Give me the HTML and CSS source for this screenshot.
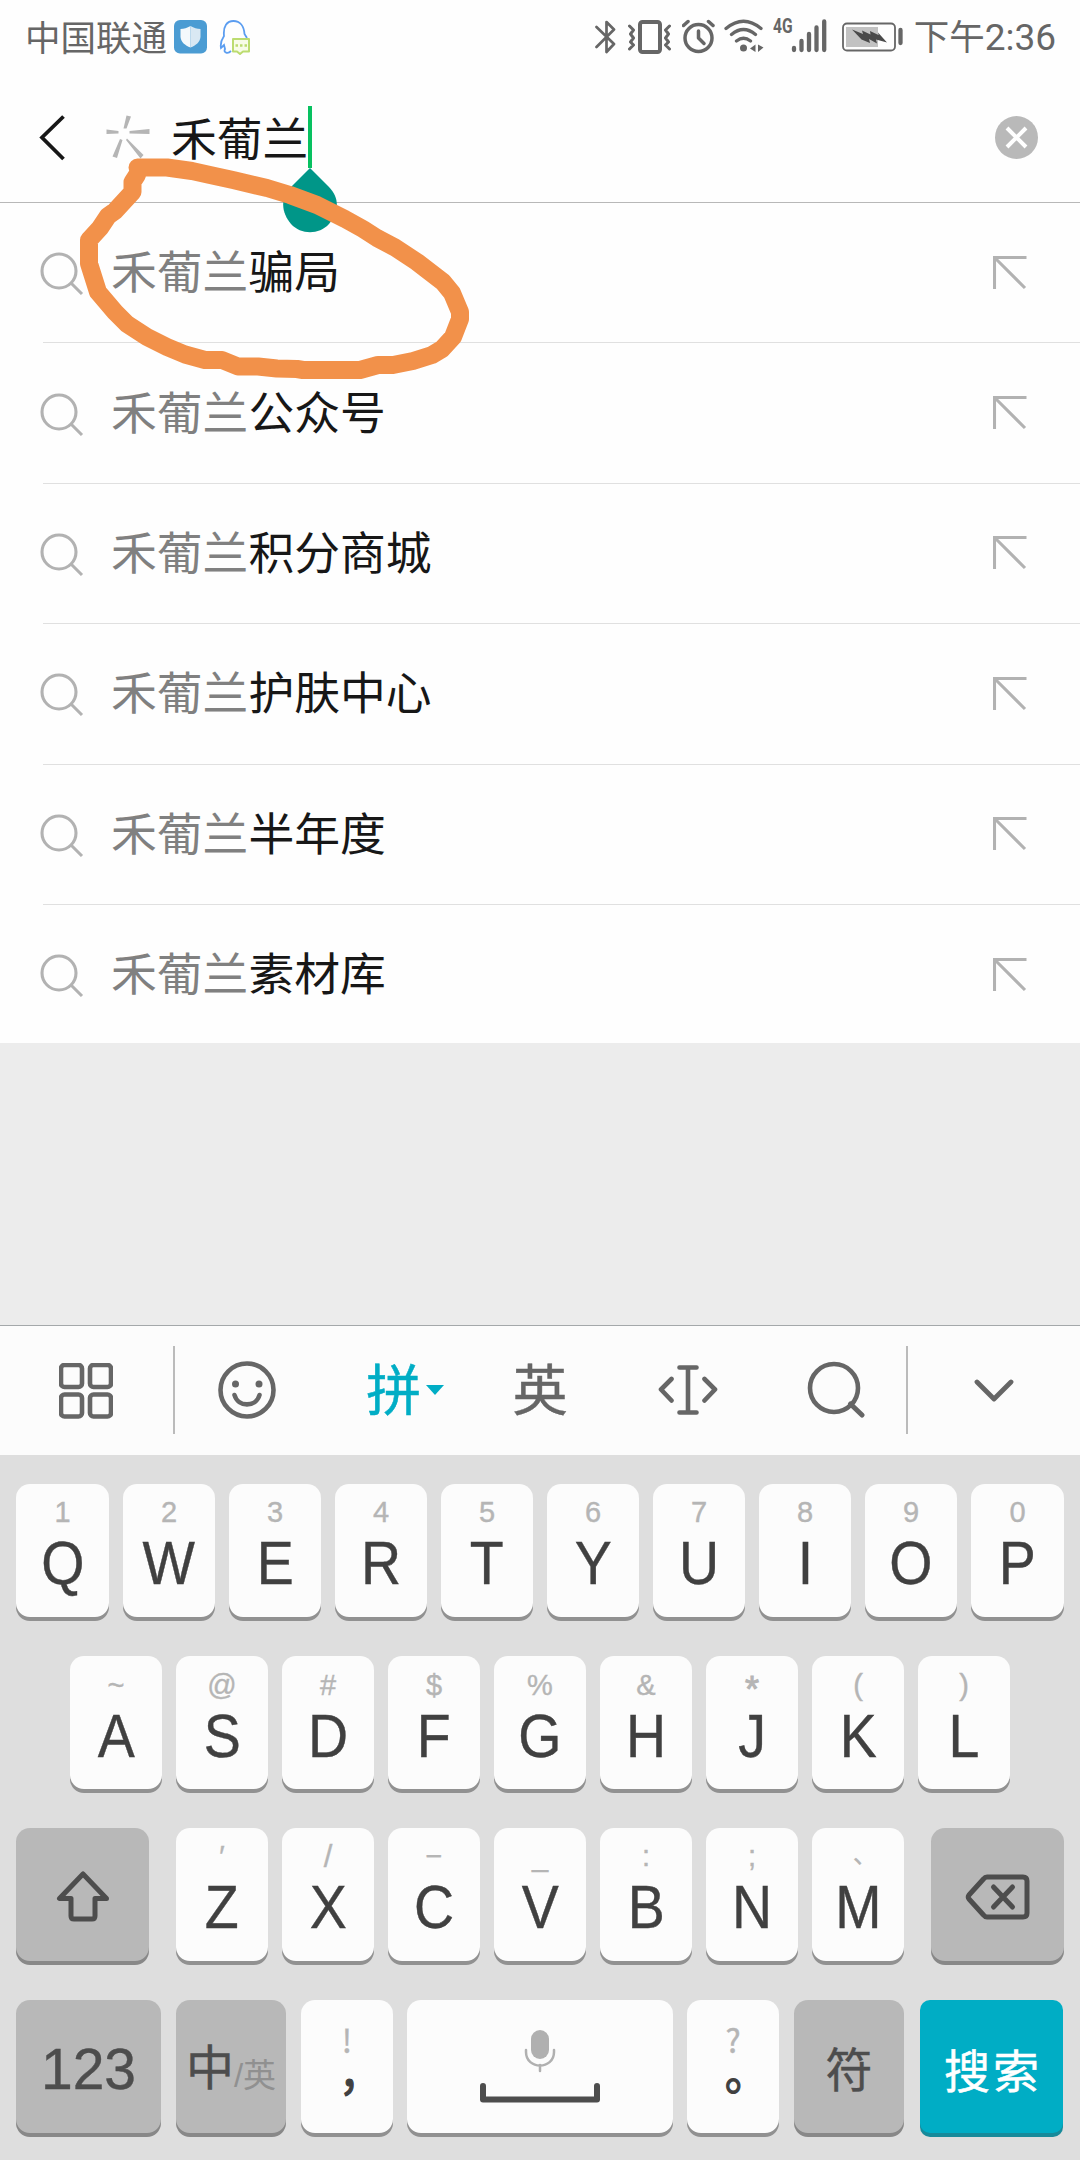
FILE: index.html
```
<!DOCTYPE html>
<html lang="zh-CN">
<head>
    <meta charset="UTF-8">
    <meta name="viewport" content="width=device-width, initial-scale=1.0">
    <title>搜索</title>
    <link rel="stylesheet" href="styles.css">
</head>
<body>

    <!-- 图标 -->
    <svg class="symbols">
        <symbol id="icon-search" viewBox="0 0 44 46">
            <circle cx="19" cy="19" r="17" />
            <path d="M31 31L42 42" />
        </symbol>
        <symbol id="icon-fill" viewBox="0 0 34 34">
            <path d="M1.500 33V1.500H33.500M2 2L32 32" />
        </symbol>
    </svg>

    <!-- 状态栏 -->
    <div class="status-bar">
        <span class="carrier">中国联通</span>
        <svg class="app-icon" width="33" height="34" viewBox="0 0 33 34">
            <rect width="33" height="33.500" rx="6" fill="#4b9cd3" />
            <path d="M16.500 6C13 8 10 9 6.500 9V17C7 22 11 25.500 16.500 27.500Z" fill="#f4f9fc" />
            <path d="M16.500 6C20 8 23 9 26.500 9V17C26 22 22 25.500 16.500 27.500Z" fill="#d9e8f3" />
        </svg>
        <svg class="qq-icon" width="32" height="36" viewBox="0 0 32 36">
            <path d="M12 32C9 35 4 34 6 30L5 26L2 29C1 24 3 20 5 17C4 7 8 2 14.500 2S25 7 25.500 15L28 19" fill="none" stroke="#5b9df0" stroke-width="1.800" />
            <path d="M14 20H30V32.500H24L21 35L18 32.500H14Z" fill="#f8fce8" stroke="#bcdc70" stroke-width="2" stroke-linejoin="round" />
            <path d="M16.500 26.500H19M21 26.500H23.500M25.500 26.500H28" stroke="#bcdc70" stroke-width="2.500" />
        </svg>

        <div class="status-icons">
            <svg width="21" height="36" viewBox="0 0 21 36">
                <path d="M1.500 8L19 25L11.500 33V3L19 10.500L1.500 28" stroke-width="2.700" />
            </svg>
            <svg class="vibrate" width="43" height="36" viewBox="0 0 43 36">
                <rect x="12" y="3" width="20" height="30" rx="2.500" stroke-width="4" />
                <path d="M1.500 7L5.500 11L2.500 15L5.500 19L2.500 23L5.500 26L1.500 30M41.500 7L37.500 11L40.500 15L37.500 19L40.500 23L37.500 26L41.500 30" stroke-width="3" />
            </svg>
            <svg class="alarm" width="34" height="36" viewBox="0 0 34 36">
                <circle cx="16.500" cy="19" r="13.500" stroke-width="3.500" />
                <path d="M16.500 12V19L22 24.500" stroke-width="3.500" />
                <path d="M1.500 6.500L6 2.500M31 6.500L26.500 2.500" stroke-width="3.500" />
            </svg>
            <svg class="wifi" width="40" height="36" viewBox="0 0 40 36">
                <path d="M2 9.500Q19.500 -5 37 9.500M7.500 15.500Q19.500 5.500 31.500 15.500M12.500 22Q19.500 16.500 26.500 22" stroke-width="3.300" />
                <circle class="solid" cx="19.500" cy="29" r="3.500" />
                <path class="solid" d="M31.500 25.500V33L26 29.500ZM34 25.500V33L39.500 28.500Z" />
            </svg>
            <span class="network">4G</span>
            <svg class="signal" width="36" height="36" viewBox="0 0 36 36">
                <path d="M3 29V31M10.500 22V31M18 15V31M25.500 8.500V31M33.200 2.500V31" stroke-width="4.300" />
            </svg>
            <svg class="battery" width="62" height="36" viewBox="0 0 62 36">
                <rect x="1" y="4.500" width="52" height="27" rx="4" stroke-width="1.800" />
                <rect x="4" y="8" width="32" height="20" fill="#c2c2c2" stroke="none" />
                <path class="bolt" d="M10 10.500L21 15L20 11.500L28.500 15.500L28 12L36.500 16L36 13.500L45 23.500L34 20.500L35 24.500L27 20L28 24L19.500 20.500Z" />
                <path d="M58.500 11V24" stroke-width="4.300" />
            </svg>
            <span class="time">下午<span class="clock">2:36</span></span>
        </div>
    </div>

    <!-- 搜索框 -->
    <div class="search-header">
        <svg class="back" width="28" height="46" viewBox="0 0 28 46">
            <path d="M24.500 1.500L3 22.500L24.500 44" fill="none" stroke="#171717" stroke-width="3.800" />
        </svg>
        <svg class="spark" width="44" height="44" viewBox="0 0 44 44">
            <path d="M20.500 0.500L25 1.500L20.500 13.500H17.500ZM0.500 14.500L12.500 16V18.500L0.500 19ZM23.500 16L43.500 14V19L23.500 18.500ZM14 24L16.500 25L11 43L6.500 41.500ZM21 23.500L37.500 40L34.500 43.500L20 25Z" fill="#b5b5b5" />
        </svg>
        <div class="search-text">
            <span class="query">禾葡兰</span>
            <span class="caret"></span>
            <svg class="handle" width="54" height="65" viewBox="0 0 54 65">
                <path d="M27 0L45.500 18.500C58 31 55 45 46 56C36 67 18 67 8 56C-1 45 -4 31 8.500 18.500Z" fill="#009688" />
            </svg>
        </div>
        <svg class="clear" width="43" height="43" viewBox="0 0 43 43">
            <circle cx="21.500" cy="21.500" r="21.500" fill="#b9b9b9" />
            <path d="M12 12L31 31M31 12L12 31" stroke="#fff" stroke-width="4" />
        </svg>
    </div>

    <!-- 搜索建议 -->
    <ul class="suggestions">
        <li><svg class="find"><use href="#icon-search" /></svg><p>禾葡兰<b>骗局</b></p><svg class="fill"><use href="#icon-fill" /></svg></li>
        <li><svg class="find"><use href="#icon-search" /></svg><p>禾葡兰<b>公众号</b></p><svg class="fill"><use href="#icon-fill" /></svg></li>
        <li><svg class="find"><use href="#icon-search" /></svg><p>禾葡兰<b>积分商城</b></p><svg class="fill"><use href="#icon-fill" /></svg></li>
        <li><svg class="find"><use href="#icon-search" /></svg><p>禾葡兰<b>护肤中心</b></p><svg class="fill"><use href="#icon-fill" /></svg></li>
        <li><svg class="find"><use href="#icon-search" /></svg><p>禾葡兰<b>半年度</b></p><svg class="fill"><use href="#icon-fill" /></svg></li>
        <li><svg class="find"><use href="#icon-search" /></svg><p>禾葡兰<b>素材库</b></p><svg class="fill"><use href="#icon-fill" /></svg></li>
    </ul>

    <!-- 手绘圈 -->
    <svg class="scribble" width="420" height="240" viewBox="70 150 420 240">
        <path d="M137.500 167.500H167L192 171L210 175L233 180L267 188L290 195L317 205L345 219L363 229L377 238L395 247.500L417 262L443 282L452 293L460 312V319L453 337L442 349L432 355L413 361L393 365H378L360 370H303L297 369L277 368.500L258 366.500H238L222 360H205L185 354.500L167 347L147 337L127 324L115 312L98 292L89 263.500V240L100 228L108 216L115 211L132.500 192V182L137 175" />
    </svg>

    <!-- 键盘工具栏 -->
    <div class="toolbar">
        <div class="tool tool-side">
            <svg width="54" height="56" viewBox="0 0 54 56">
                <rect x="2" y="2" width="21" height="22" rx="3.500" />
                <rect x="31" y="2" width="21" height="22" rx="3.500" />
                <rect x="2" y="31.500" width="21" height="22" rx="3.500" />
                <rect x="31" y="31.500" width="21" height="22" rx="3.500" />
            </svg>
        </div>
        <div class="tools">
            <div class="tool tool-face">
                <svg width="58" height="58" viewBox="0 0 58 58">
                    <circle cx="29" cy="29" r="26.500" />
                    <path d="M16.500 34C20 46.500 38 46.500 41.500 34" />
                    <circle class="solid" cx="17.500" cy="23" r="3.500" />
                    <circle class="solid" cx="41" cy="23" r="3.500" />
                </svg>
            </div>
            <div class="tool tool-text tool-active">拼<span class="triangle"></span></div>
            <div class="tool tool-text">英</div>
            <div class="tool tool-cursor">
                <svg width="60" height="52" viewBox="0 0 60 52">
                    <path d="M13.500 15L3 25.500L13.500 36.500M46.500 15L57 25.500L46.500 36.500M21.500 3.500H38.500M30 3.500V48.500M21.500 48.500H38.500" />
                </svg>
            </div>
            <div class="tool tool-search">
                <svg width="58" height="58" viewBox="0 0 58 58">
                    <circle cx="27" cy="27" r="24" />
                    <path d="M43.500 43L55 54" stroke-width="5" />
                </svg>
            </div>
        </div>
        <div class="tool tool-side">
            <svg width="40" height="24" viewBox="0 0 40 24">
                <path d="M3 3L20 20L37 3" stroke-width="4.800" />
            </svg>
        </div>
    </div>

    <!-- 键盘 -->
    <div class="keyboard">
        <div class="row row-first">
            <div class="key"><small>1</small><span>Q</span></div>
            <div class="key"><small>2</small><span>W</span></div>
            <div class="key"><small>3</small><span>E</span></div>
            <div class="key"><small>4</small><span>R</span></div>
            <div class="key"><small>5</small><span>T</span></div>
            <div class="key"><small>6</small><span>Y</span></div>
            <div class="key"><small>7</small><span>U</span></div>
            <div class="key"><small>8</small><span>I</span></div>
            <div class="key"><small>9</small><span>O</span></div>
            <div class="key"><small>0</small><span>P</span></div>
        </div>
        <div class="row row-second">
            <div class="key"><small>~</small><span>A</span></div>
            <div class="key"><small>@</small><span>S</span></div>
            <div class="key"><small>#</small><span>D</span></div>
            <div class="key"><small>$</small><span>F</span></div>
            <div class="key"><small>%</small><span>G</span></div>
            <div class="key"><small>&amp;</small><span>H</span></div>
            <div class="key"><small class="star">*</small><span>J</span></div>
            <div class="key"><small>(</small><span>K</span></div>
            <div class="key"><small>)</small><span>L</span></div>
        </div>
        <div class="row row-third">
            <div class="key key-dark key-wide">
                <svg width="54" height="52" viewBox="0 0 54 52">
                    <path d="M27 3L3.500 27.500H15V45Q15 48 18 48H36Q39 48 39 45V27.500H50.500Z" />
                </svg>
            </div>
            <div class="letters">
                <div class="key"><small>′</small><span>Z</span></div>
                <div class="key"><small class="slash">/</small><span>X</span></div>
                <div class="key"><small>−</small><span>C</span></div>
                <div class="key"><small>_</small><span>V</span></div>
                <div class="key"><small>:</small><span>B</span></div>
                <div class="key"><small>;</small><span>N</span></div>
                <div class="key"><small class="dun">、</small><span>M</span></div>
            </div>
            <div class="key key-dark key-wide">
                <svg width="66" height="48" viewBox="0 0 66 48">
                    <path d="M22 4H58Q62 4 62 8V40Q62 44 58 44H22Q20 44 18.500 42L4 26Q2.500 24 4 22L18.500 6Q20 4 22 4Z" />
                    <path d="M28.500 14L47.500 34M47.500 14L28.500 34" />
                </svg>
            </div>
        </div>
        <div class="row row-bottom">
            <div class="key key-dark key-num">123</div>
            <div class="key key-dark key-lang">中<i>/英</i></div>
            <div class="key"><small class="mark">!</small><span class="comma">，</span></div>
            <div class="key key-space">
                <svg width="120" height="74" viewBox="0 0 120 74">
                    <rect x="51" y="0" width="18" height="29" rx="9" fill="#b0b0b0" stroke="none" />
                    <path d="M46 20V22C46 40 74 40 74 22V20M60 35V41" stroke="#b0b0b0" stroke-width="2.500" />
                    <path d="M3 56V69.500H117V56" stroke-width="6" />
                </svg>
            </div>
            <div class="key key-period"><small class="mark">?</small><span class="period">。</span></div>
            <div class="key key-dark key-symbol">符</div>
            <div class="key key-go">搜索</div>
        </div>
    </div>

</body>
</html>
```
FILE: styles.css
```
* {
    box-sizing: border-box;
}

body {
    margin: 0;
    width: 1080px;
    height: 2160px;
    display: flex;
    flex-direction: column;
    position: relative;
    overflow: hidden;
    background-color: #ececec;
    font-family: "Noto Sans CJK SC", sans-serif;
}

svg {
    flex: none;
    display: block;
}

.symbols {
    position: absolute;
    width: 0;
    height: 0;
}

/* 状态栏 */
.status-bar {
    height: 74px;
    padding: 0 24px 0 25px;
    display: flex;
    align-items: center;
    background-color: #fefefe;
    color: #666;
    font-size: 35.5px;
    line-height: 36px;
}

.carrier {
    margin-bottom: 2px;
}

.app-icon {
    margin: 0 0 0 7px;
}

.qq-icon {
    margin-left: 12px;
}

.status-icons {
    margin-left: auto;
    display: flex;
    align-items: center;
}

.status-icons svg {
    fill: none;
    stroke: #666;
    stroke-linecap: round;
    stroke-linejoin: round;
}

.status-icons .solid {
    fill: #666;
    stroke: none;
}

.status-icons .bolt {
    fill: #4a4a4a;
    stroke: none;
}

.vibrate { margin-left: 12px; }
.alarm { margin-left: 11px; }
.wifi { margin-left: 8px; }
.battery { margin-left: 15px; }

.network {
    width: 19px;
    margin: 0 0 22px 9px;
    font: bold 20px/20px Roboto, sans-serif;
    transform: scaleX(0.78);
    transform-origin: left;
}

.signal {
    margin-left: -1px;
}

.time {
    margin: 0 0 2px 10px;
    white-space: nowrap;
}

.clock {
    font-family: Roboto, sans-serif;
    font-size: 37px;
}

/* 搜索框 */
.search-header {
    height: 129px;
    padding: 0 42px 2px 39px;
    display: flex;
    align-items: center;
    background-color: #fefefe;
    border-bottom: 1px solid #b8b8b8;
}

.back {
    margin-top: 2px;
}

.spark {
    margin-left: 39px;
}

.search-text {
    position: relative;
    height: 62px;
    margin-left: 21px;
    font-size: 45.8px;
    line-height: 60px;
    color: #171717;
}

.query {
    display: block;
}

.caret {
    position: absolute;
    left: 137px;
    top: 0;
    width: 4px;
    height: 62px;
    background-color: #07c160;
}

.handle {
    position: absolute;
    left: 112px;
    top: 62px;
    z-index: 1;
}

.clear {
    margin-left: auto;
}

/* 搜索建议 */
.suggestions {
    height: 840px;
    margin: 0;
    padding: 0;
    list-style: none;
    background-color: #fefefe;
}

.suggestions li {
    height: 140.4px;
    margin-left: 43px;
    padding-right: 53px;
    display: flex;
    align-items: center;
    border-bottom: 1px solid #e0e0e0;
}

.suggestions li:last-child {
    height: 138px;
    padding-top: 2px;
    border-bottom: none;
}

.suggestions p {
    margin: 0 0 7px 27px;
    font-size: 45.8px;
    line-height: 60px;
    color: #808080;
}

.suggestions b {
    font-weight: normal;
    color: #171717;
}

.suggestions svg {
    fill: none;
    stroke: #b2b2b2;
    stroke-width: 3.1;
}

.find {
    width: 44px;
    height: 46px;
    margin: 5px 0 0 -3px;
}

.fill {
    width: 34px;
    height: 34px;
    margin-left: auto;
}

.scribble {
    position: absolute;
    left: 70px;
    top: 150px;
    z-index: 2;
    fill: none;
    stroke: #f2914a;
    stroke-width: 18;
    stroke-linecap: round;
    stroke-linejoin: round;
}

/* 键盘工具栏 */
.toolbar {
    height: 130px;
    margin-top: auto;
    display: flex;
    border-top: 1px solid #a4a8aa;
    background-color: #fcfcfc;
}

.tool {
    position: relative;
    width: 147px;
    display: flex;
    align-items: center;
    justify-content: center;
    color: #666;
    font-size: 55px;
    line-height: 60px;
}

.tool-side {
    width: 173px;
}

.tools {
    width: 735px;
    height: 88px;
    margin-top: 20px;
    display: flex;
    border-left: 2px solid #bbb;
    border-right: 2px solid #bbb;
}

.tool-text {
    padding-bottom: 8px;
    -webkit-text-stroke: 0.5px;
}

.tool-face {
    padding-right: 2px;
}

.tool-cursor {
    padding-left: 3px;
}

.tool-search {
    padding-left: 8px;
}

.tool-active {
    color: #00adc5;
}

.triangle {
    position: absolute;
    left: 105px;
    top: 39px;
    border: 9px solid transparent;
    border-top: 10px solid #00adc5;
    border-bottom: none;
}

.toolbar svg {
    fill: none;
    stroke: #666;
    stroke-width: 4.6;
    stroke-linecap: round;
    stroke-linejoin: round;
}

.toolbar .solid {
    fill: #666;
    stroke: none;
}

/* 键盘 */
.keyboard {
    height: 705px;
    padding: 29px 16px 0;
    display: flex;
    flex-direction: column;
    gap: 35px;
    background-color: #dedede;
}

.row {
    height: 137px;
    display: flex;
    justify-content: center;
    gap: 14px;
}

.row-first .key:first-child,
.row-first .key:last-child {
    width: 93px;
}

.row-second .key {
    padding-top: 14px;
}

.row-third {
    justify-content: space-between;
}

.letters {
    display: flex;
    gap: 14px;
}

.row-bottom {
    justify-content: flex-start;
    gap: 15px;
}

.key {
    flex: none;
    width: 92px;
    height: 133px;
    padding-top: 13px;
    display: flex;
    flex-direction: column;
    align-items: center;
    gap: 6px;
    border-radius: 14px;
    background-color: #fcfcfc;
    box-shadow: 0 4px 0 #919191;
    color: #404040;
    font-family: "Liberation Sans", "Noto Sans CJK SC", sans-serif;
}

.key small {
    height: 30px;
    font-size: 29px;
    line-height: 30px;
    color: #b5b5b5;
    -webkit-text-stroke: 0.4px;
}

.key span {
    font-size: 61px;
    line-height: 60px;
    transform: scaleX(0.91);
    -webkit-text-stroke: 0.4px;
}

.key .star {
    font-size: 36px;
    line-height: 40px;
    -webkit-text-stroke: 1px;
}

.key .slash {
    font-size: 31px;
    line-height: 32px;
}

.key .dun {
    padding-left: 14px;
    font-size: 24px;
    line-height: 28px;
}

.key svg {
    fill: none;
    stroke: #4d4d4d;
    stroke-width: 5;
    stroke-linecap: round;
    stroke-linejoin: round;
}

.key-dark {
    padding-top: 4px;
    flex-direction: row;
    justify-content: center;
    gap: 0;
    background-color: #b8b8b8;
    box-shadow: 0 4px 0 #888;
    color: #4d4d4d;
}

.key-wide {
    width: 133px;
}

.key-num {
    width: 145px;
    font-size: 57px;
    -webkit-text-stroke: 0.4px;
}

.key-lang {
    width: 110px;
    padding: 0 0 6px;
    font-size: 48px;
    -webkit-text-stroke: 0.5px;
}

.key-lang i {
    margin-top: 18px;
    font-size: 33px;
    font-style: normal;
    color: #909090;
    -webkit-text-stroke: 0;
}

.key .mark {
    margin-top: 11px;
    font-family: "Noto Sans CJK SC", sans-serif;
    font-size: 32px;
}

.key .comma,
.key .period {
    margin-top: -5px;
    padding-left: 30px;
    font-family: "Noto Sans CJK SC", sans-serif;
    font-size: 48px;
    line-height: 28px;
    -webkit-text-stroke: 1.2px;
}

.key-space {
    width: 266px;
    margin-left: -1px;
    padding-top: 30px;
}

.key-period {
    margin-left: -1px;
}

.key-symbol {
    width: 110px;
    padding: 0 0 1px;
    font-size: 47px;
    -webkit-text-stroke: 0.4px;
}

.key-go {
    width: 143px;
    margin-left: 1px;
    padding: 2px 0 0 3px;
    flex-direction: row;
    justify-content: center;
    background-color: #00adc5;
    box-shadow: 0 4px 0 #178a9a;
    border-radius: 10px;
    color: #fff;
    font-size: 46px;
    letter-spacing: 3px;
    -webkit-text-stroke: 0.5px;
}
```
